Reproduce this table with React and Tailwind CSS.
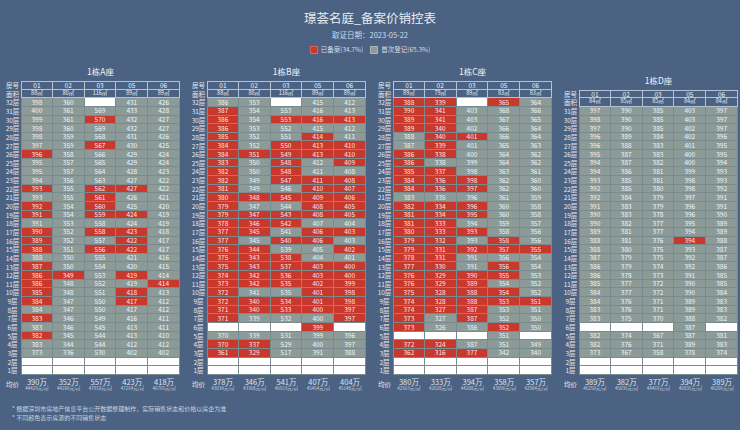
import React from 'react';

const COLS = ['01', '02', '03', '05', '06'];

const BLOCKS = [
  {
    name: '1栋A座',
    top: 32,
    areas: ['88㎡', '80㎡', '116㎡', '89㎡', '89㎡'],
    rows: `398 360 - 431 426
400 361 569 433 428
399 361 570* 432 427
398 360 569 432 427
398 359 568 431 426
397 359 567* 430 425
396* 358 566 429 424
395 357 565 429 424
395 357 564 428 423
394 356 563 427 422
393* 355 562* 427* 422
393 355 561* 426 421
392* 354 560* 425 420
391* 354 559* 424* 419
391 353 558 424 419
390* 352 558* 423* 418
389* 352 557 422* 417
388* 351 556* 422* 417
388 350 555 421 416
387* 350 554 420 415
386* 349* 553 419* 414
386* 348 552 419 414*
385* 348 551 418* 413
384* 347 550 417* 412
384 347 550 417 412
383* 346 549 416 411
383 346 545 413 411
382* 345 544 413 410
383 344 544 412 412
373 336 530 402 402
- - - - -
- - - - -`,
    avg: [['390万', '44429元/㎡'], ['352万', '44206元/㎡'], ['557万', '47910元/㎡'], ['423万', '47264元/㎡'], ['418万', '46765元/㎡']],
  },
  {
    name: '1栋B座',
    top: 32,
    areas: ['88㎡', '80㎡', '116㎡', '89㎡', '89㎡'],
    rows: `386 353 - 415 412
387* 354 553 416 413
386* 354 553* 416* 413*
386* 353 552 415 412
385* 352 551 414* 411
384* 352 550* 413* 410*
384* 351* 549* 413* 410*
383* 350 548* 412 409*
382* 350 548* 411 408
382* 349 547* 411* 408*
381* 349 546 410* 407*
380* 348* 545* 409* 406*
379* 347 544 408* 405*
379* 347* 543* 408* 405*
378* 346* 542* 407 404
377* 345* 541 406* 403*
377* 345 540* 406* 403
376* 344* 539 405 402*
375* 343* 538* 404 401
375* 343* 537* 403* 400*
374* 342* 536* 403* 400*
373* 342* 535* 402* 399*
372* 341 535 401* 398*
372* 340* 534* 401* 398*
371* 340* 533* 400* 397*
371* 339 532 400 397*
- - - 399* -
370 339 531 399 396
370* 337* 529 400 397
361* 329* 517 391 388
- - - - -
- - - - -`,
    avg: [['378万', '43034元/㎡'], ['346万', '43368元/㎡'], ['541万', '46553元/㎡'], ['407万', '45454元/㎡'], ['404万', '45148元/㎡']],
  },
  {
    name: '1栋C座',
    top: 32,
    areas: ['89㎡', '79㎡', '89㎡', '83㎡', '83㎡'],
    rows: `388* 339* - 365* 364
390* 341* 403 368 366
389* 341* 403 367 365
389* 340* 402 366 364
388 340* 401* 366 364
387 339* 401 365 363
386* 338* 400 364 362
386* 338 399 364 362
385* 337* 398 363 361
384* 336* 398* 362 360
384* 336* 397* 362 360
383 335 396 361 359
382* 334* 396* 360 358
381* 334* 395* 360 358
381* 333* 394 359 357
380* 333* 393* 358 356
379* 332* 393 358* 356
379* 331* 392* 357* 355*
378* 331* 391 356 354
377* 330* 391 356* 354
376* 329* 390* 355* 353
376* 329* 389* 354 352
375* 328* 388* 354* 352
374* 328* 388* 353* 351*
374* 327* 387* 353 351
373* 327 387* 352 350
373* 326 386 352* 350
- - - 351 -
372* 324* 387 351 349
362* 316* 377* 342 340
- - - - -
- - - - -`,
    avg: [['380万', '42563元/㎡'], ['333万', '42028元/㎡'], ['394万', '44208元/㎡'], ['358万', '43096元/㎡'], ['357万', '42904元/㎡']],
  },
  {
    name: '1栋D座',
    top: 31,
    areas: ['84㎡', '85㎡', '85㎡', '84㎡', '84㎡'],
    rows: `397 390 385 403 397
398 390 385 403 397
397 390 385 402 397
396 389 384 402 396
396 388 383 401 395
395 387 383 400 395
394 387 382 400 394
394 386 381 399 393
393 385 381 398 393
392 385 380 398 392
392 384 379 397 391
391 383 379 396 391
390 383 378 396 390
390 382 377 395 389
389 381 377 394 389
388 381 376 394* 388
388 380 375 393 387
387 379 375 392 387
386 379 374 392 386
386 378 373 391 385
385 377 372 390 385
384 377 372 390 384
384 376 371 389 383
383 376 371 389 383
383 375 370 388 382
- - - 387 -
382 374 367 387 381
382 376 371 389 383
373 367 358 378 374
- - - - -
- - - - -`,
    avg: [['389万', '46250元/㎡'], ['382万', '45035元/㎡'], ['377万', '44469元/㎡'], ['394万', '46835元/㎡'], ['389万', '46206元/㎡']],
  },
];

const Label = ({ children }) => (
  <div className="flex items-center justify-center whitespace-nowrap text-[#e4e9ef] text-[6.5px]">{children}</div>
);

const HeadCell = ({ children, first, top, small }) => (
  <div
    className={`flex items-center justify-center whitespace-nowrap border-r border-b border-[#b4c1d2] text-[#eef2f6] ${
      first ? 'border-l' : ''
    } ${top ? 'border-t' : ''} ${small ? 'text-[5.5px]' : 'text-[6.5px]'}`}
  >
    {children}
  </div>
);

const Cell = ({ v, first }) => {
  const white = v === '-';
  const red = v.endsWith('*');
  const tone = white
    ? 'bg-white'
    : red
    ? 'bg-[#c9382d] text-[#f8e6e2]'
    : 'bg-[#8c9b97] text-[#f0f3f2]';
  return (
    <div
      className={`flex items-center justify-center border-r border-b border-[#7a8b8f] text-[6.5px] ${tone} ${
        first ? 'border-l' : ''
      }`}
    >
      {white ? '' : v.replace('*', '')}
    </div>
  );
};

const Block = ({ b }) => {
  const rows = b.rows.split('\n').map((r) => r.trim().split(' '));
  return (
    <div className="flex-1 flex flex-col min-w-0">
      <div className="pl-[17px] text-center text-[8.5px] leading-[10px] text-[#eef2f6] mb-[5px]">{b.name}</div>
      <div className="grid grid-cols-[17px_repeat(5,minmax(0,1fr))] auto-rows-[8.65px] leading-none">
        <Label>房号</Label>
        {COLS.map((c, i) => (
          <HeadCell key={c} first={i === 0} top>
            {c}
          </HeadCell>
        ))}
        <Label>面积</Label>
        {b.areas.map((a, i) => (
          <HeadCell key={i} first={i === 0} small>
            {a}
          </HeadCell>
        ))}
        {rows.map((r, ri) => (
          <React.Fragment key={ri}>
            <Label>{b.top - ri}层</Label>
            {r.map((v, ci) => (
              <Cell key={ci} v={v} first={ci === 0} />
            ))}
          </React.Fragment>
        ))}
      </div>
      <div className="grid grid-cols-[17px_repeat(5,minmax(0,1fr))] h-[18px] pt-[3px]">
        <div className="flex items-center justify-center whitespace-nowrap text-[6.5px] text-[#e4e9ef]">均价</div>
        {b.avg.map(([p, u], i) => (
          <div key={i} className="flex flex-col items-center whitespace-nowrap text-[#dfe5ec]">
            <span className="text-[7.5px] leading-[8px]">{p}</span>
            <span className="text-[4.5px] leading-[5px] text-[#cfd7e1]">{u}</span>
          </div>
        ))}
      </div>
    </div>
  );
};

export default function App() {
  return (
    <div className="w-[740px] h-[430px] overflow-hidden bg-[#4b6283] font-['Noto_Sans_CJK_SC',sans-serif] pt-[10px]">
      <div className="text-center text-[12.5px] leading-[16px] text-[#e8ecf1]">璟荟名庭_备案价销控表</div>
      <div className="mt-[4px] text-center text-[7.5px] leading-[10px] text-[#d3dbe4]">取证日期：2023-05-22</div>
      <div className="mt-[6px] flex justify-center items-center gap-[7px] h-[8px] text-[6.5px] text-[#d6dde6]">
        <div className="flex items-center gap-[3px]">
          <span className="w-[8px] h-[8px] bg-[#c9382d] border border-[#d9695f]" />
          <span>已备案(34.7%)</span>
        </div>
        <div className="flex items-center gap-[3px]">
          <span className="w-[8px] h-[8px] bg-[#8c9b97] border border-[#a9b5b2]" />
          <span>首次登记(65.3%)</span>
        </div>
      </div>
      <div className="mt-[12px] flex items-end gap-[10px] pl-[4px] pr-[2px]">
        {BLOCKS.map((b) => (
          <Block key={b.name} b={b} />
        ))}
      </div>
      <div className="mt-[11px] pl-[12px] text-[6px] leading-[9.5px] text-[#c9d2de]">
        <div>* 根据深圳市房地产信息平台公开数据整理制作，实际销售状态和价格以房企为准</div>
        <div>* 不同颜色表示房源的不同销售状态</div>
      </div>
    </div>
  );
}
